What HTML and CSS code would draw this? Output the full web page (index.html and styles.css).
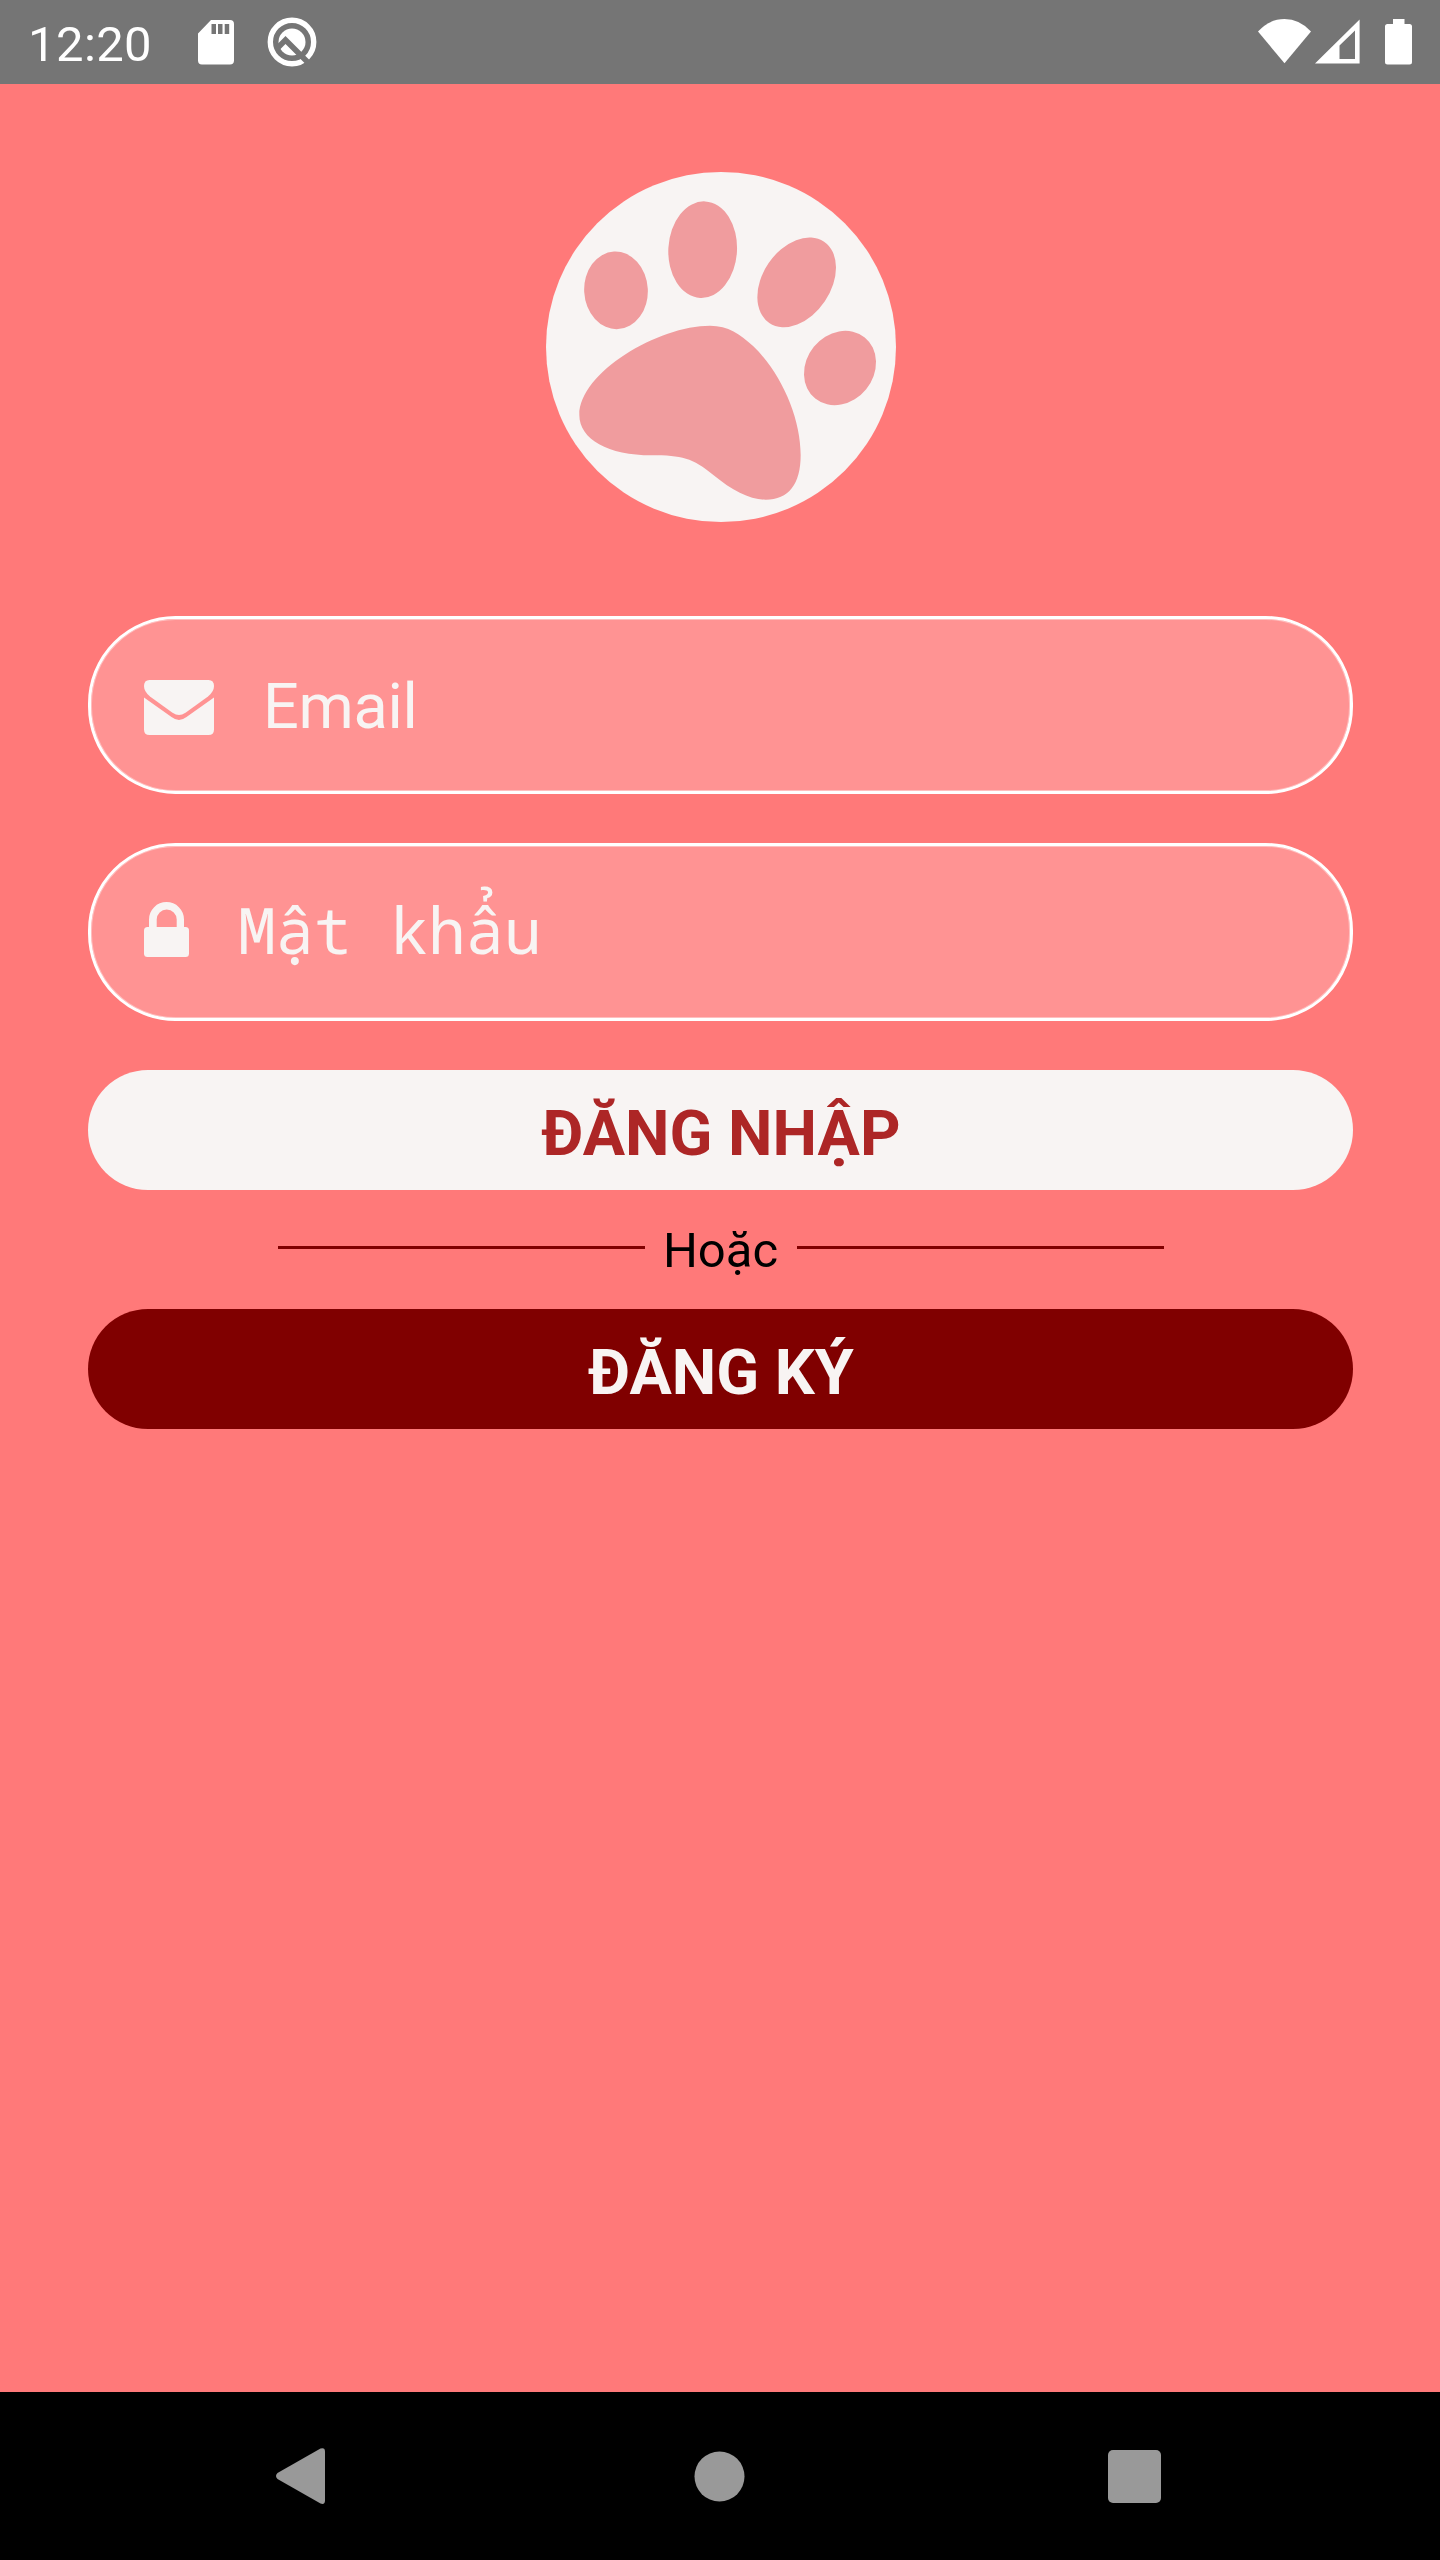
FILE: index.html
```html
<!DOCTYPE html>
<html lang="vi">
<head>
<meta charset="utf-8">
<title>Đăng nhập</title>
<link rel="stylesheet" href="styles.css">
</head>
<body>
<div class="screen">
  <header class="status-bar">
    <span class="time">12:20</span>
    <svg class="sd-icon" width="36" height="45" viewBox="0 0 36 45"><path fill="#fff" fill-rule="evenodd" d="M13 0H32Q36 0 36 4V40.500Q36 44.500 32 44.500H4Q0 44.500 0 40.500V13.500ZM13.500 4V14H18V4ZM20 4V14H24.500V4ZM26.700 4V14H31.200V4Z"/></svg>
    <svg class="q-icon" width="50" height="50" viewBox="0 0 50 50">
      <circle cx="25" cy="25" r="21.700" fill="none" stroke="#fff" stroke-width="5.400"/>
      <circle cx="25" cy="25" r="13.500" fill="#fff"/>
      <path d="M11 30.500L18.500 23L45 49.500" fill="none" stroke="#757575" stroke-width="5.600"/>
    </svg>
    <svg class="wifi-icon" width="53" height="45" viewBox="0 0 53 45"><path fill="#fff" d="M26.500 44.300L0 12.500Q11.500 0 26.500 0T53 12.500Z"/></svg>
    <svg class="signal-icon" width="45" height="45" viewBox="0 0 45 45"><path fill="#fff" fill-rule="evenodd" d="M0 44.600L44.600 0.500V44.600ZM24.500 26.500V40H40V11.500Z"/></svg>
    <svg class="battery-icon" width="27" height="46" viewBox="0 0 27 46"><path fill="#fff" d="M8 0H19.500V5H24.500Q27 5 27 7.500V43Q27 45.500 24.500 45.500H2.500Q0 45.500 0 43V7.500Q0 5 2.500 5H8Z"/></svg>
  </header>

  <main class="content">
    <svg class="logo" width="350" height="350" viewBox="48 36 1050 1050">
      <circle cx="573" cy="561" r="525" fill="#f8f4f3"/>
      <g fill="#f09c9e">
        <ellipse cx="258" cy="391" rx="95.500" ry="116.500" transform="rotate(-3 258 391)"/>
        <ellipse cx="518" cy="269" rx="103" ry="145" transform="rotate(3 518 269)"/>
        <ellipse cx="800" cy="367" rx="102" ry="147" transform="rotate(34 800 367)"/>
        <ellipse cx="930" cy="624" rx="101" ry="118" transform="rotate(39 930 624)"/>
        <path d="M540 497C595 497 630 522 670 559C755 641 812 775 812 885C812 973 776 1019 707 1019C660 1019 607 992 550 945C488 894 455 886 365 886C235 886 148 838 148 765C148 637 385 497 540 497Z"/>
      </g>
    </svg>

    <div class="field email">
      <svg width="70" height="55" viewBox="0 0 70 55" fill="#f8f4f3"><path d="M5.500 0H64.500Q70 0 70 6Q70 11.500 64 16.500L41.500 32.700Q38 35 35 35T28.500 32.700L6 16.500Q0 11.500 0 6Q0 0 5.500 0Z"/><path d="M0 17.500L27.500 37Q31.500 40 35 40T42.500 37L70 17.500V49.500Q70 55 64.500 55H5.500Q0 55 0 49.500Z"/></svg>
      <span class="hint">Email</span>
    </div>
    <div class="field password">
      <svg width="45" height="55" viewBox="0 0 45 55" fill="#f8f4f3"><path d="M5 27V17.500A17.500 17.500 0 0 1 40 17.500V27H32.700V17.500A10 10 0 0 0 12.700 17.500V27Z"/><rect y="25" width="45" height="30" rx="3.500"/></svg>
      <span class="hint hint-mono">Mật khẩu</span>
    </div>

    <div class="button login">ĐĂNG NHẬP</div>
    <div class="divider"><i class="line"></i><span class="or">Hoặc</span><i class="line"></i></div>
    <div class="button register">ĐĂNG KÝ</div>
  </main>

  <nav class="nav-bar">
    <svg width="49" height="56" viewBox="0 0 49 56"><path fill="#999" d="M1.500 25L44.500 0.500Q49 -1 49 3.500V52.500Q49 57 44.500 55.500L1.500 31Q-1.500 28 1.500 25Z"/></svg>
    <svg class="home" width="51" height="51" viewBox="0 0 51 51"><circle cx="25.500" cy="25.500" r="25" fill="#999"/></svg>
    <svg width="53" height="53" viewBox="0 0 53 53"><rect width="53" height="53" rx="5" fill="#999"/></svg>
  </nav>
</div>
</body>
</html>
```
FILE: styles.css
```css
* { box-sizing: border-box; }
body { margin: 0; }
svg { display: block; flex: none; }

.screen {
  width: 1440px;
  height: 2560px;
  display: flex;
  flex-direction: column;
  background: #ff7979;
  font-family: Roboto, sans-serif;
}

.status-bar {
  height: 84px;
  flex: none;
  display: flex;
  align-items: flex-start;
  padding: 0 28px;
  background: #757575;
  color: #fff;
}
.time { width: 169.500px; font-size: 49px; line-height: 60px; margin-top: 15px; letter-spacing: 0.4px; }
.sd-icon { margin-top: 20px; }
.q-icon { margin: 17px 0 0 33.800px; }
.wifi-icon { margin: 19px 0 0 auto; }
.signal-icon { margin: 19px 0 0 4px; }
.battery-icon { margin: 19px 0 0 25px; }

.content {
  flex: 1;
  display: flex;
  flex-direction: column;
  padding: 88px 87px 0 88px;
}
.logo { align-self: center; margin: 0 0 94px 1px; }

.field {
  height: 178px;
  margin-bottom: 49px;
  padding: 4px 53px 0;
  display: flex;
  align-items: center;
  gap: 49px;
  border: 3px solid #fff;
  border-radius: 87.500px;
  background: #ff9393;
  box-shadow: inset 0 0 0 1px rgba(255, 255, 255, 0.4);
}
.password { padding: 0 53px 5px; }
.hint { font-size: 63px; line-height: 74px; letter-spacing: -0.3px; color: #f8f4f3; }
.hint-mono {
  font-family: "Droid Sans Mono", "Noto Sans Mono", "DejaVu Sans Mono", monospace;
  letter-spacing: 0.2px;
  padding-top: 1px;
}

.button {
  height: 120px;
  border-radius: 60px;
  padding-left: 1px;
  text-align: center;
  font-size: 63px;
  font-weight: 700;
  line-height: 128px;
}
.login { background: #f8f4f3; color: #ad2626; }
.register { background: #800000; color: #f8f4f3; }

.divider {
  height: 119px;
  padding: 0 189px 0 190px;
  display: flex;
  align-items: center;
}
.line { width: 367px; height: 3px; background: #800000; margin-top: -4px; }
.or { flex: 1; text-align: center; font-size: 49px; line-height: 58px; color: #000; padding: 2px 1px 0 0; }

.nav-bar {
  height: 168px;
  flex: none;
  display: flex;
  align-items: center;
  justify-content: space-between;
  padding: 0 279px 0 276px;
  background: #000;
}
.home { margin-left: 6px; }
```
